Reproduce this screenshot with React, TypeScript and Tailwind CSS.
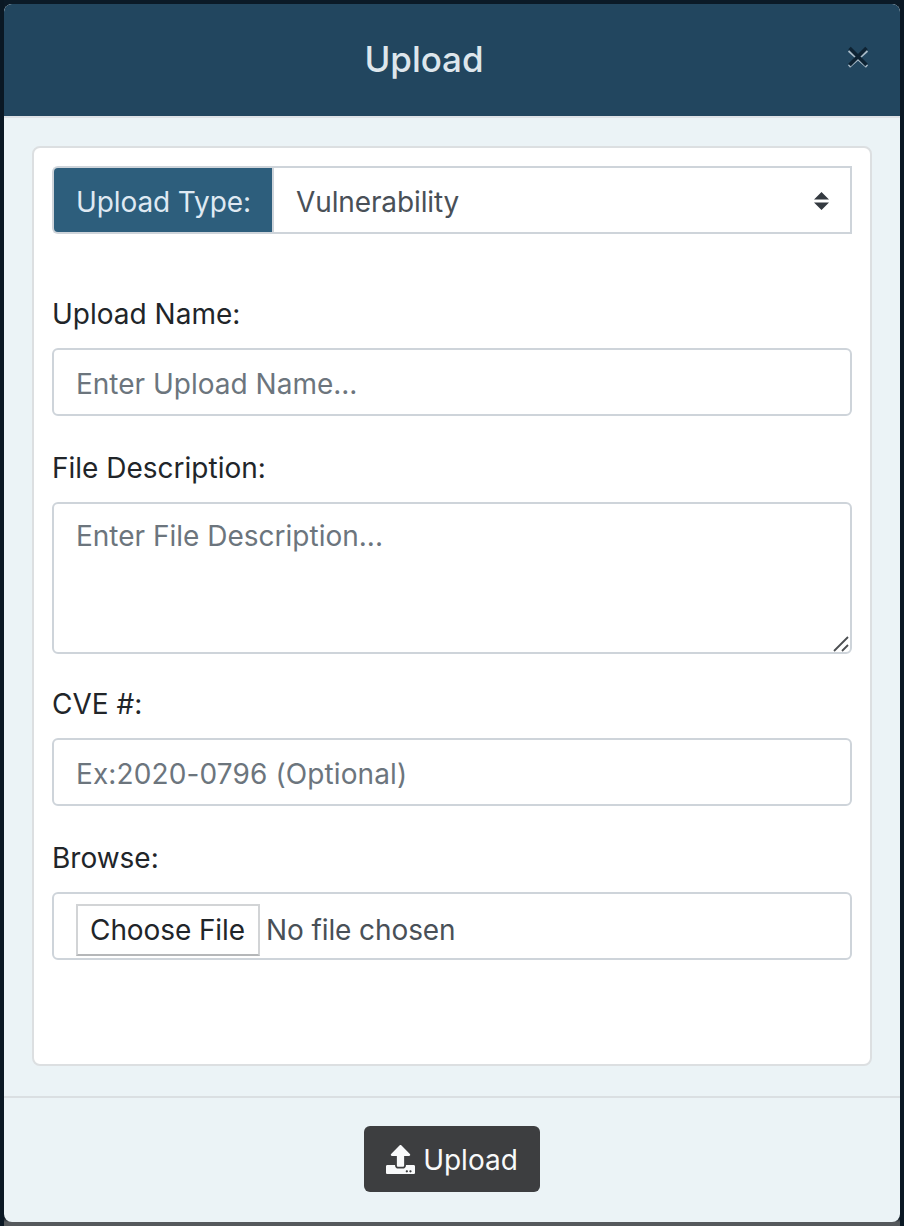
import React from "react";
import { FaUpload } from "react-icons/fa";

const control = "w-full rounded-[6px] border-2 border-[#ced4da] bg-white px-[22px] text-[28px] text-[#495057] outline-none placeholder:text-[#6c757d]";

function Field({ label, className, children }: { label: string; className: string; children: React.ReactNode }) {
  return (
    <div className={className}>
      <div className="mb-[14px] h-[40px] text-[28px] leading-[40px] text-[#212529]">{label}</div>
      {children}
    </div>
  );
}

export default function App() {
  return (
    <div className="h-[1226px] w-[904px] bg-[linear-gradient(to_bottom,#0b1a27_0,#0b1722_1218px,#55595c_1222px)] font-['Inter','Liberation_Sans',sans-serif]">
      <div className="h-full border-x-4 border-[#0a1824] pt-1 pb-1">
        <div className="flex h-full flex-col overflow-hidden rounded-[8px] bg-[#ebf3f6]">
          <header className="relative flex h-[114px] shrink-0 items-center justify-center rounded-t-[7px] border-b-2 border-[#dee2e6] bg-[#22465f]">
            <h1 className="mr-[56px] pb-[2px] text-[35px] leading-[42px] font-medium tracking-[-0.05px] text-[#dee6ec]">Upload</h1>
            <button aria-label="Close" className="absolute top-[41px] right-[30px] h-[24px] w-[24px]">
              <svg viewBox="0 0 24 24" width="24" height="24" fill="none">
                <path d="M3 5.5 L21 21.5 M21 5.5 L3 21.5" stroke="#a9bbc8" strokeWidth="3.2" />
                <path d="M3.5 3 L20.5 20 M20.5 3 L3.5 20" stroke="#0e2333" strokeWidth="3.6" />
              </svg>
            </button>
          </header>
          <main className="mx-[28px] mt-[28px] h-[920px] shrink-0 rounded-[8px] border-2 border-[#dcdfe1] bg-white px-[18px] pt-[18px]">
            <div className="flex h-[68px]">
              <div className="flex w-[220px] items-center rounded-l-[6px] border-2 border-r-0 border-[#ced4da] bg-[#2d5e7c] pt-[4px] pl-[22px] text-[28px] tracking-[-0.1px] text-[#dfe9f2]">
                <span className="whitespace-nowrap">Upload Type:</span>
              </div>
              <button className="flex flex-1 items-center justify-between border-2 border-[#ced4da] pt-[3px] pr-[20px] pl-[22px] text-[28px] tracking-[-0.12px] text-[#495057]">
                <span className="pt-[1px]">Vulnerability</span>
                <svg className="mb-[2px]" width="16" height="20" viewBox="0 0 16 20" fill="#343a40">
                  <path d="M7.5 1 L15 8.5 H0 Z M0 11.5 H15 L7.5 19 Z" />
                </svg>
              </button>
            </div>
            <Field label="Upload Name:" className="mt-[60px]">
              <input className={`${control} block h-[68px] pt-[4px]`} placeholder="Enter Upload Name..." />
            </Field>
            <Field label="File Description:" className="mt-[32px]">
              <div className="relative">
                <textarea className={`${control} block h-[152px] resize-none pt-[11px] leading-[42px]`} placeholder="Enter File Description..." />
                <svg className="absolute right-[3px] bottom-[2px]" width="16" height="16" viewBox="0 0 16 16" fill="none" stroke="#4c4f52" strokeWidth="1.8">
                  <path d="M1 15 L15 1 M9 15 L15 9" />
                </svg>
              </div>
            </Field>
            <Field label="CVE #:" className="mt-[30px]">
              <input className={`${control} block h-[68px] pt-[4px] tracking-[0.12px]`} placeholder="Ex:2020-0796 (Optional)" />
            </Field>
            <Field label="Browse:" className="mt-[32px]">
              <div className={`${control} flex h-[68px] items-start pt-[10px] tracking-[-0.1px]`}>
                <button className="h-[52px] w-[184px] shrink-0 border-2 border-[#d2d4d6] border-b-[#b5b7b9] pr-[1px] text-[28px] leading-[48px] tracking-[-0.1px] whitespace-nowrap text-[#212529]">Choose File</button>
                <span className="ml-[6px] leading-[52px]">No file chosen</span>
              </div>
            </Field>
          </main>
          <footer className="mt-[30px] flex flex-1 justify-center border-t-2 border-[#dadfe2] pt-[28px]">
            <button className="flex h-[66px] w-[176px] items-center justify-center gap-[8px] rounded-[6px] bg-[#3d3e40] text-[28px] text-[#f8f9fa]">
              <FaUpload size={29} />
              <span className="pt-[2px]">Upload</span>
            </button>
          </footer>
        </div>
      </div>
    </div>
  );
}
